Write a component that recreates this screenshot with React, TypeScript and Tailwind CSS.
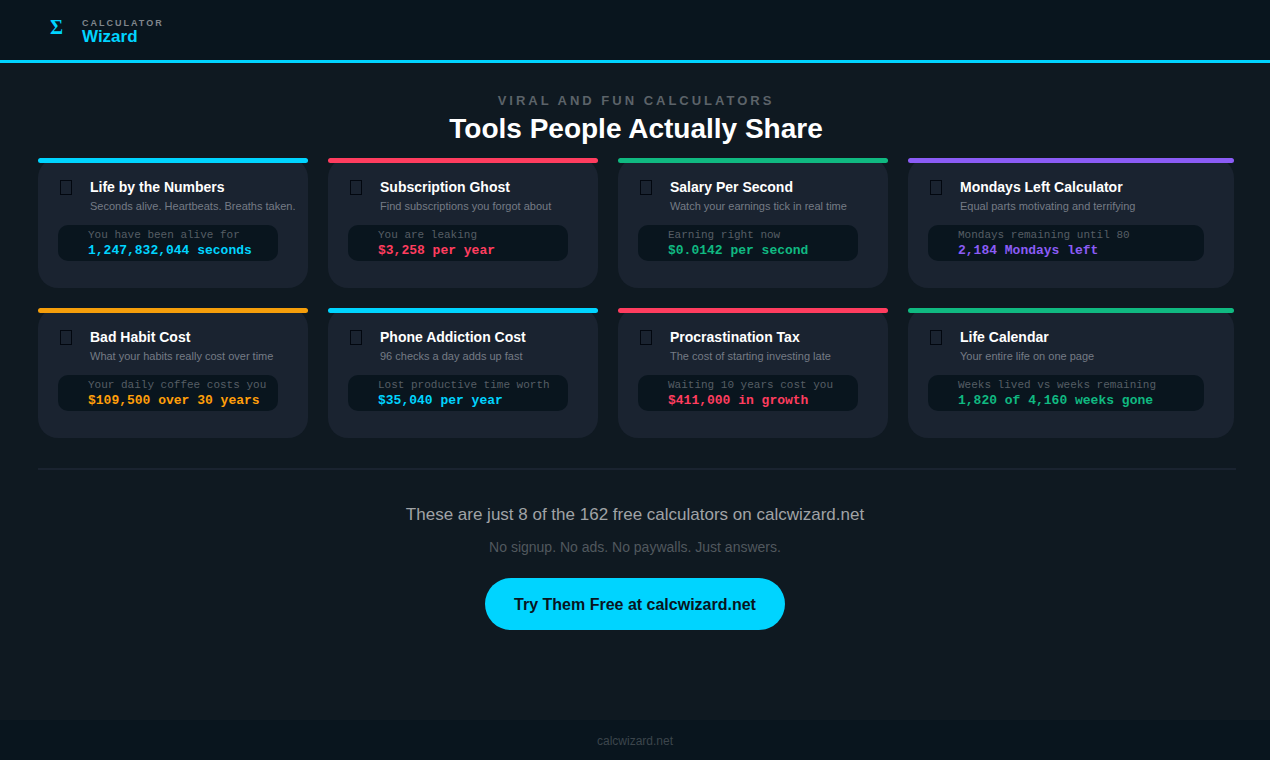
interface Calculator {
  id: string;
  title: string;
  description: string;
  label: string;
  value: string;
  bar: string;
  text: string;
}

const calculators: Calculator[] = [
  {
    id: "life-numbers",
    title: "Life by the Numbers",
    description: "Seconds alive. Heartbeats. Breaths taken.",
    label: "You have been alive for",
    value: "1,247,832,044 seconds",
    bar: "bg-[#00d4ff]",
    text: "text-[#00d4ff]",
  },
  {
    id: "subscriptions",
    title: "Subscription Ghost",
    description: "Find subscriptions you forgot about",
    label: "You are leaking",
    value: "$3,258 per year",
    bar: "bg-[#ff3d5f]",
    text: "text-[#ff3d5f]",
  },
  {
    id: "salary",
    title: "Salary Per Second",
    description: "Watch your earnings tick in real time",
    label: "Earning right now",
    value: "$0.0142 per second",
    bar: "bg-[#10b981]",
    text: "text-[#10b981]",
  },
  {
    id: "mondays",
    title: "Mondays Left Calculator",
    description: "Equal parts motivating and terrifying",
    label: "Mondays remaining until 80",
    value: "2,184 Mondays left",
    bar: "bg-[#8b5cf6]",
    text: "text-[#8b5cf6]",
  },
  {
    id: "bad-habit",
    title: "Bad Habit Cost",
    description: "What your habits really cost over time",
    label: "Your daily coffee costs you",
    value: "$109,500 over 30 years",
    bar: "bg-[#f59e0b]",
    text: "text-[#ff9f0a]",
  },
  {
    id: "phone",
    title: "Phone Addiction Cost",
    description: "96 checks a day adds up fast",
    label: "Lost productive time worth",
    value: "$35,040 per year",
    bar: "bg-[#00d4ff]",
    text: "text-[#00d4ff]",
  },
  {
    id: "procrastination",
    title: "Procrastination Tax",
    description: "The cost of starting investing late",
    label: "Waiting 10 years cost you",
    value: "$411,000 in growth",
    bar: "bg-[#ff3d5f]",
    text: "text-[#ff3d5f]",
  },
  {
    id: "life-calendar",
    title: "Life Calendar",
    description: "Your entire life on one page",
    label: "Weeks lived vs weeks remaining",
    value: "1,820 of 4,160 weeks gone",
    bar: "bg-[#10b981]",
    text: "text-[#10b981]",
  },
];

function CalculatorCard({ calculator }: { calculator: Calculator }) {
  return (
    <article className="flex h-[130px] flex-col rounded-[20px] bg-[#1a2330]">
      <div className={`h-[5px] shrink-0 rounded-[3px] ${calculator.bar}`} />
      <div className="flex pt-4 pl-[22px]">
        <svg
          className="mt-px mr-[18px] shrink-0"
          width="12"
          height="15"
          viewBox="0 0 12 15"
          fill="none"
          stroke="#02070f"
          aria-hidden="true"
        >
          <rect x="0.5" y="0.5" width="11" height="14" />
        </svg>
        <div className="whitespace-nowrap">
          <h2 className="text-[14px] leading-4 font-bold text-white">
            {calculator.title}
          </h2>
          <p className="mt-[3px] text-[11px] leading-4 text-[#757b85]">
            {calculator.description}
          </p>
        </div>
      </div>
      <div className="mt-[11px] mr-[30px] ml-5 h-9 rounded-[10px] bg-[#09151e] pt-[2px] pl-[30px] font-['Liberation_Mono',monospace] whitespace-nowrap">
        <p className="text-[11px] leading-4 text-[#565e65]">
          {calculator.label}
        </p>
        <p className={`text-[13px] leading-4 font-bold ${calculator.text}`}>
          {calculator.value}
        </p>
      </div>
    </article>
  );
}

export default function App() {
  return (
    <div className="flex min-h-screen flex-col bg-[#0f1921] font-['Liberation_Sans',Arial,sans-serif]">
      <header className="flex h-[63px] border-b-[3px] border-[#00d4ff] bg-[#09151e] pt-[17px] pl-[50px]">
        <span
          className="w-8 font-['Liberation_Serif',serif] text-[20px] leading-5 font-bold text-[#00d4ff]"
          aria-hidden="true"
        >
          Σ
        </span>
        <div>
          <p className="text-[9px] leading-3 font-bold tracking-[2px] text-[#80868c]">
            CALCULATOR
          </p>
          <p className="text-[17px] leading-4 font-bold text-[#00d4ff]">
            Wizard
          </p>
        </div>
      </header>

      <main className="flex-1 pr-9 pl-[38px]">
        <div className="pt-[30px] pb-[13px] text-center">
          <p className="text-[13px] leading-4 font-bold tracking-[3px] text-[#5c6369]">
            VIRAL AND FUN CALCULATORS
          </p>
          <h1 className="mt-1 text-[28px] leading-8 font-bold text-white">
            Tools People Actually Share
          </h1>
        </div>

        <section className="grid grid-cols-[270fr_270fr_270fr_326fr] gap-5">
          {calculators.map((calculator) => (
            <CalculatorCard key={calculator.id} calculator={calculator} />
          ))}
        </section>

        <hr className="mt-[30px] -mr-[2px] border-t-2 border-[#1a2330]" />

        <section className="mr-[2px] flex flex-col items-center pt-[35px] pb-10">
          <p className="text-[17px] leading-5 text-[#a0a3a6]">
            These are just 8 of the 162 free calculators on calcwizard.net
          </p>
          <p className="mt-3 text-[14px] leading-5 text-[#51585e]">
            No signup. No ads. No paywalls. Just answers.
          </p>
          <a
            href="#"
            className="mt-[21px] flex h-[52px] w-[300px] items-center justify-center rounded-full bg-[#00d4ff] pt-px text-[16px] font-bold text-[#09151e]"
          >
            Try Them Free at calcwizard.net
          </a>
        </section>
      </main>

      <footer className="flex h-10 items-center justify-center bg-[#09151e] pt-[2px] text-[12px] text-[#3c454c]">
        calcwizard.net
      </footer>
    </div>
  );
}
